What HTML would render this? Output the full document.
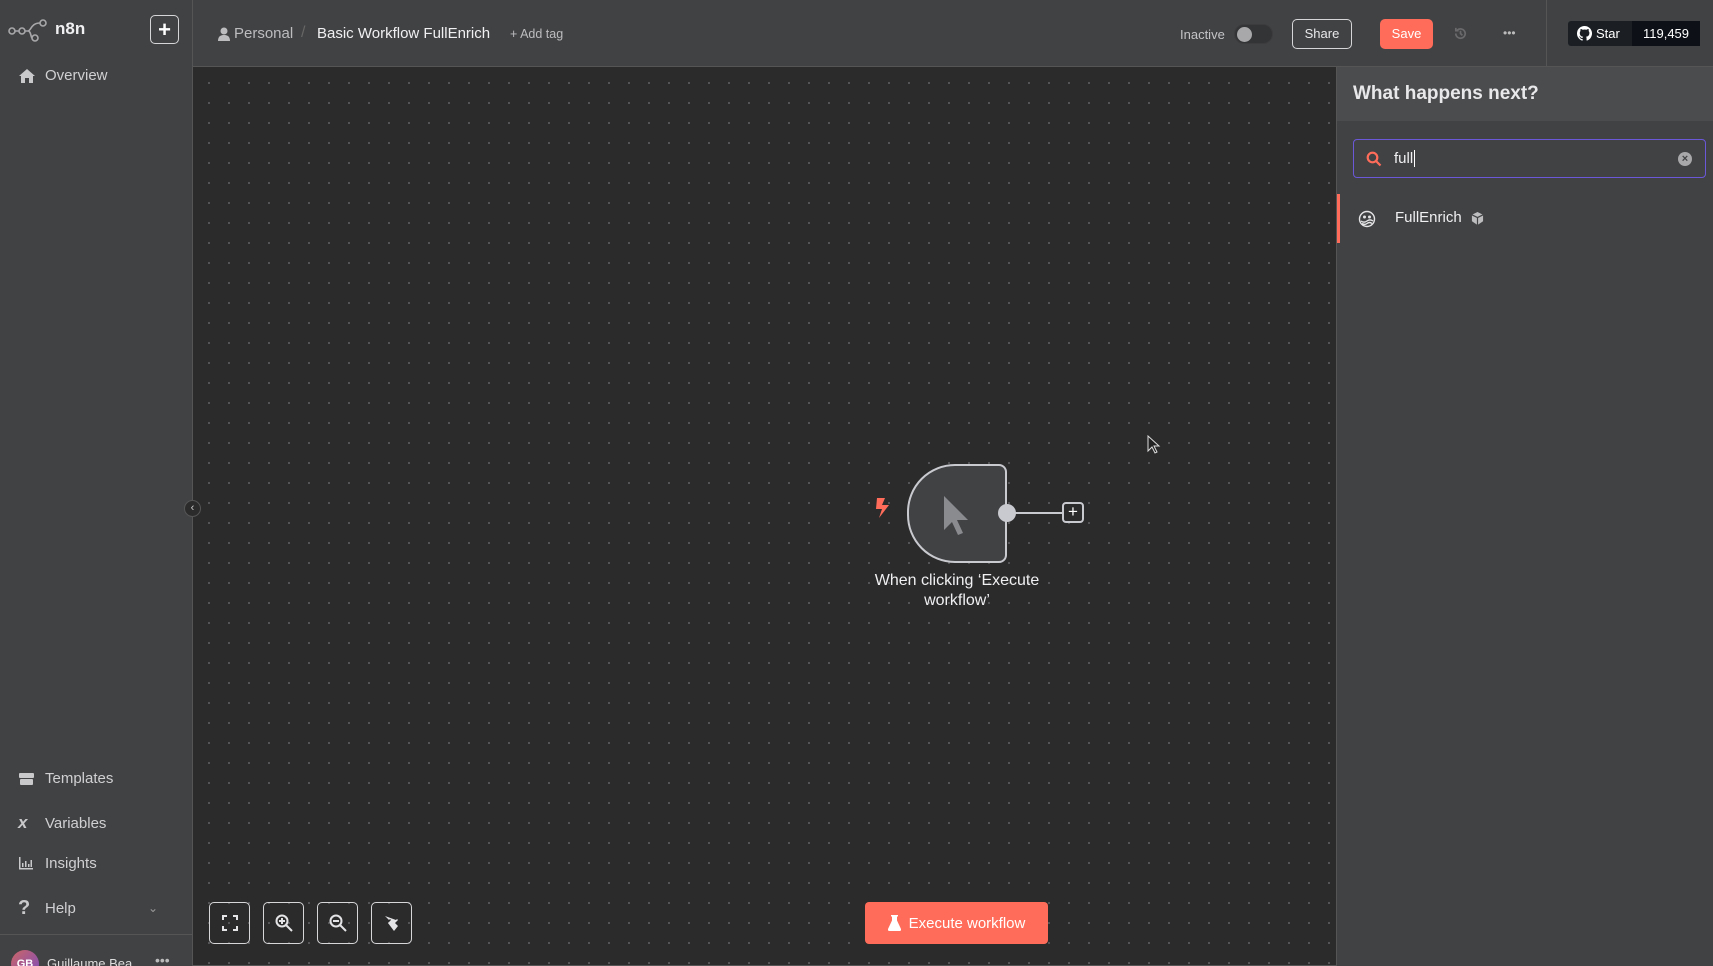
<!DOCTYPE html>
<html><head><meta charset="utf-8"><style>
*{box-sizing:border-box;margin:0;padding:0}
html,body{width:1713px;height:966px;overflow:hidden}
body{background:#2b2b2c;font-family:"Liberation Sans",sans-serif;color:#e4e4e6;position:relative}
.abs{position:absolute}
#side{left:0;top:0;width:193px;height:966px;background:#414244;border-right:1px solid #555}
#head{left:193px;top:0;width:1520px;height:67px;background:#414244;border-bottom:1px solid #555}
#canvas{left:193px;top:67px;width:1143px;height:899px;background-color:#2b2b2c;background-image:radial-gradient(circle,#5a5a5c 0.9px,transparent 1.2px);background-size:20px 20px;background-position:6px 6px;border-bottom:1px solid #555}
.nav{position:absolute;left:18px;font-size:15px;color:#d0d0d3;display:flex;align-items:center}
.nav .ic{width:27px;display:flex;align-items:center}
.btn{position:absolute;border:1px solid #d6d6d8;border-radius:5px}
#panel{left:1336px;top:67px;width:377px;height:899px;background:#414244;border-left:1px solid #555}
</style></head><body>
<div id="side" class="abs">
 <svg class="abs" style="left:8px;top:18px" width="40" height="24" viewBox="0 0 40 24" fill="none" stroke="#a8a8ab" stroke-width="1.6"><circle cx="4" cy="13" r="3"/><circle cx="14" cy="13" r="3"/><circle cx="27" cy="20" r="3"/><circle cx="35" cy="5" r="3"/><path d="M7 13h4M17 13h3c3 0 3 7 4 7M20 13c3 0 3-8 12-8"/></svg>
 <div class="abs" style="left:55px;top:19px;font-size:17px;font-weight:bold;color:#f0f0f2">n8n</div>
 <div class="btn" style="left:150px;top:15px;width:29px;height:29px;display:flex;align-items:center;justify-content:center;font-size:22px;color:#fff;font-weight:bold">+</div>
 <div class="nav" style="top:67px"><span class="ic"><svg width="18" height="16" viewBox="0 0 18 16" fill="#c9c9cc"><path d="M9 1L1 8h2v7h4v-5h4v5h4V8h2z"/></svg></span>Overview</div>
 <div class="nav" style="top:770px"><span class="ic"><svg width="17" height="14" viewBox="0 0 17 14" fill="#c9c9cc"><rect x="1" y="1" width="15" height="5" rx="1"/><rect x="2" y="7" width="13" height="6" rx="1"/></svg></span>Templates</div>
 <div class="nav" style="top:813px"><span class="ic" style="font-weight:bold;font-size:17px;color:#c9c9cc;font-style:italic">x</span>Variables</div>
 <div class="nav" style="top:855px"><span class="ic"><svg width="15" height="13" viewBox="0 0 15 13" fill="#c9c9cc"><path d="M1 0h1.5v11H15v1.5H1z M4 6h1.5v4H4zM7 4h1.5v6H7zM10 7h1.5v3H10zM12.5 3H14v7h-1.5z"/></svg></span>Insights</div>
 <div class="nav" style="top:897px"><span class="ic" style="font-weight:bold;font-size:20px;color:#c9c9cc">?</span>Help</div>
 <div class="abs" style="left:148px;top:901px;color:#999;font-size:12px">&#8964;</div>
 <div class="abs" style="left:0;top:934px;width:193px;height:1px;background:#555"></div>
 <div class="abs" style="left:11px;top:950px;width:28px;height:28px;border-radius:50%;background:linear-gradient(135deg,#c66 ,#7a4bbf);font-size:11px;color:#fff;text-align:center;line-height:28px;font-weight:bold">GB</div>
 <div class="abs" style="left:47px;top:956px;font-size:13px;color:#ddd">Guillaume Bea</div>
 <div class="abs" style="left:155px;top:952px;font-size:14px;color:#bbb">•••</div>
</div>
<div id="head" class="abs">
 <svg class="abs" style="left:25px;top:27px" width="12" height="14" viewBox="0 0 12 14" fill="#bdbdc0"><circle cx="6" cy="4" r="3.5"/><path d="M0 14c0-5 3-6 6-6s6 1 6 6z"/></svg>
 <div class="abs" style="left:41px;top:25px;font-size:15px;color:#bdbdc0">Personal</div>
 <div class="abs" style="left:108px;top:24px;font-size:16px;color:#666">/</div>
 <div class="abs" style="left:124px;top:25px;font-size:15px;color:#f0f0f2">Basic Workflow FullEnrich</div>
 <div class="abs" style="left:317px;top:27px;font-size:12.5px;color:#bdbdc0">+ Add tag</div>
 <div class="abs" style="left:987px;top:27px;font-size:13px;color:#c4c4c7">Inactive</div>
 <div class="abs" style="left:1041px;top:24px;width:39px;height:20px;border-radius:10px;background:#333436;border:1px solid #3c3c3e"><div style="position:absolute;left:2px;top:2px;width:15px;height:15px;border-radius:50%;background:#a8a8ab"></div></div>
 <div class="btn" style="left:1099px;top:19px;width:60px;height:30px;font-size:13px;text-align:center;line-height:28px;color:#e8e8ea">Share</div>
 <div class="abs" style="left:1187px;top:19px;width:53px;height:30px;border-radius:5px;background:#ff6d5a;font-size:13px;text-align:center;line-height:30px;color:#fff">Save</div>
 <svg class="abs" style="left:1260px;top:26px" width="15" height="15" viewBox="0 0 16 16" fill="none" stroke="#6a6a6c" stroke-width="1.8"><path d="M3 8a5 5 0 1 0 1.5-3.5M3 2v3h3M8 5v3l2 2"/></svg>
 <div class="abs" style="left:1310px;top:26px;font-size:12px;color:#bbb">•••</div>
 <div class="abs" style="left:1353px;top:0;width:1px;height:67px;background:#555"></div>
 <div class="abs" style="left:1375px;top:21px;width:132px;height:25px;border-radius:3px;background:#1b1f24;font-size:13px;color:#fff">
  <div class="abs" style="left:64px;top:0;width:68px;height:25px;background:#0d1117;text-align:center;line-height:25px">119,459</div>
  <svg class="abs" style="left:9px;top:5px" width="15" height="15" viewBox="0 0 16 16" fill="#fff"><path d="M8 0a8 8 0 0 0-2.5 15.6c.4 0 .5-.2.5-.4v-1.5c-2.2.5-2.700-1-2.700-1-.4-.9-.9-1.200-.9-1.200-.7-.5.1-.5.1-.5.8.1 1.200.8 1.200.8.7 1.300 1.900.9 2.400.7 0-.5.3-.9.5-1.100-1.800-.2-3.600-.9-3.600-4 0-.9.3-1.600.8-2.100-.1-.2-.4-1 .1-2.100 0 0 .7-.2 2.200.8a7.500 7.500 0 0 1 4 0c1.500-1 2.200-.8 2.200-.8.4 1.100.2 1.900.1 2.100.5.6.8 1.300.8 2.100 0 3.100-1.900 3.800-3.600 4 .3.3.6.8.6 1.500v2.200c0 .2.1.5.6.4A8 8 0 0 0 8 0z"/></svg>
  <div class="abs" style="left:28px;top:5px">Star</div>
 </div>
</div>
<div id="canvas" class="abs">
 <div class="abs" style="left:-9px;top:433px;width:17px;height:17px;border-radius:50%;background:#2b2b2c;border:1px solid #555;color:#ccc;font-size:11px;text-align:center;line-height:15px">&#8249;</div>
 <svg class="abs" style="left:680px;top:429px" width="20" height="24" viewBox="0 0 20 24" fill="#ff6d5a"><path d="M4 2h8l-3 7h7L6 22l3-9H3z"/></svg>
 <div class="abs" style="left:714px;top:397px;width:100px;height:99px;background:#414244;border:2px solid #c9cad0;border-radius:48px 8px 8px 48px"></div>
 <svg class="abs" style="left:748px;top:427px" width="30" height="42" viewBox="0 0 30 42" fill="#8a8b8f"><path d="M3 2v34l8-8 6 13 5-2-6-13h11z"/></svg>
 <div class="abs" style="left:805px;top:437px;width:18px;height:18px;border-radius:50%;background:#c9cad0"></div>
 <div class="abs" style="left:820px;top:445px;width:50px;height:2px;background:#c9cad0"></div>
 <div class="abs" style="left:869px;top:435px;width:22px;height:21px;border:2px solid #c9cad0;border-radius:4px;text-align:center;line-height:16px;font-size:17px;color:#fff">+</div>
 <div class="abs" style="left:664px;top:504px;width:200px;text-align:center;font-size:16px;line-height:20px;color:#f0f0f2">When clicking ‘Execute workflow’</div>
 <svg class="abs" style="left:954px;top:368px" width="14" height="20" viewBox="0 0 14 20"><path d="M1 1v15l4-4 3 6 2-1-3-6h5z" fill="#222" stroke="#ddd" stroke-width="1"/></svg>
 <div class="btn" style="left:16px;top:835px;width:41px;height:42px"><svg style="margin:12px" width="16" height="16" viewBox="0 0 16 16" fill="none" stroke="#e4e4e6" stroke-width="2"><path d="M1 5V1h4M11 1h4v4M15 11v4h-4M5 15H1v-4"/></svg></div>
 <div class="btn" style="left:70px;top:835px;width:41px;height:42px"><svg style="margin:11px" width="18" height="18" viewBox="0 0 18 18" fill="none" stroke="#e4e4e6" stroke-width="2"><circle cx="7" cy="7" r="5.5"/><path d="M11 11l6 6M7 4v6M4 7h6"/></svg></div>
 <div class="btn" style="left:124px;top:835px;width:41px;height:42px"><svg style="margin:11px" width="18" height="18" viewBox="0 0 18 18" fill="none" stroke="#e4e4e6" stroke-width="2"><circle cx="7" cy="7" r="5.5"/><path d="M11 11l6 6M4 7h6"/></svg></div>
 <div class="btn" style="left:178px;top:835px;width:41px;height:42px"><svg style="margin:11px" width="18" height="18" viewBox="0 0 18 18" fill="#e4e4e6"><path d="M2 2l4 4 1-1 1 1-3 3 6 8 4-5-3-3 3-3-1-1-1 1z"/></svg></div>
 <div class="abs" style="left:672px;top:835px;width:183px;height:42px;border-radius:4px;background:#ff6d5a;color:#fff;font-size:15px;display:flex;align-items:center;justify-content:center;gap:8px"><svg width="13" height="16" viewBox="0 0 13 16" fill="#fff"><path d="M3 0h7v1.5H9v4l4 8.5c.5 1-.2 2-1.200 2H1.200C.2 16-.5 15 0 14l4-8.500v-4H3z"/></svg>Execute workflow</div>
</div>
<div id="panel" class="abs">
 <div class="abs" style="left:0;top:0;width:377px;height:54px;background:#4b4c4e"></div>
 <div class="abs" style="left:16px;top:16px;font-size:19px;font-weight:bold;color:#e8e8ea">What happens next?</div>
 <div class="abs" style="left:16px;top:72px;width:353px;height:39px;border:1px solid #6a58d8;border-radius:4px;background:#414244">
  <svg class="abs" style="left:12px;top:11px" width="16" height="16" viewBox="0 0 16 16" fill="none" stroke="#ff6d5a" stroke-width="2.2"><circle cx="6.5" cy="6.5" r="4.8"/><path d="M10 10l4.5 4.5"/></svg>
  <div class="abs" style="left:40px;top:10px;font-size:15px;color:#f0f0f2">full<span style="border-left:1px solid #fff;margin-left:1px"></span></div>
  <div class="abs" style="left:324px;top:12px;width:14px;height:14px;border-radius:50%;background:#a8a8ab;color:#414244;font-size:11px;font-weight:bold;text-align:center;line-height:14px">×</div>
 </div>
 <div class="abs" style="left:0;top:127px;width:3px;height:49px;background:#ff6d5a"></div>
 <svg class="abs" style="left:21px;top:143px" width="18" height="18" viewBox="0 0 18 18" fill="none" stroke="#e4e4e6" stroke-width="1.4"><circle cx="9" cy="9" r="7.5"/><circle cx="6.5" cy="7" r="0.8" fill="#e4e4e6"/><circle cx="11.5" cy="7" r="0.8" fill="#e4e4e6"/><path d="M3 11c2 1.5 4 1.5 6 0s4-1.5 6 0M4 13.5c2 1.2 3.5 1.2 5 0s3.5-1.2 5 0"/></svg>
 <div class="abs" style="left:58px;top:142px;font-size:15px;color:#f0f0f2">FullEnrich</div>
 <svg class="abs" style="left:134px;top:145px" width="13" height="13" viewBox="0 0 14 14" fill="#bdbdc0"><path d="M7 0l6 3v7l-6 4-6-4V3z"/><path d="M1 3l6 3 6-3M7 6v8" stroke="#414244" stroke-width="1.3" fill="none"/></svg>
</div>
</body></html>
